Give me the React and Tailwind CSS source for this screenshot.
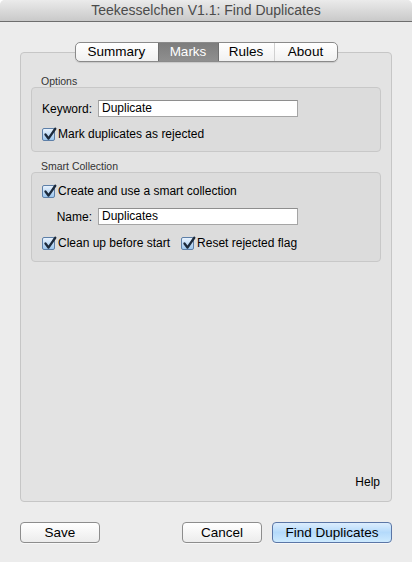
import React from 'react';

const font = { fontFamily: '"Liberation Sans", Arial, sans-serif' };

function CheckBox() {
  return (
    <span className="relative inline-block w-[13px] h-[13px] shrink-0 rounded-[2px] border border-[#5d7fa8] bg-gradient-to-b from-[#e8f2fd] to-[#9cc6ee]">
      <svg viewBox="0 0 13 13" className="absolute -left-[1px] -top-[2px] w-[15px] h-[15px]">
        <path d="M3 6.5 L5.6 10 L11.5 1.5" fill="none" stroke="#1c2a3c" strokeWidth="2" strokeLinecap="round" strokeLinejoin="round" />
      </svg>
    </span>
  );
}

function Check({ label }) {
  return (
    <label className="flex items-center gap-[3px] h-[16px] text-[12px] text-black">
      <CheckBox />
      <span>{label}</span>
    </label>
  );
}

function Field({ label, value }) {
  return (
    <div className="flex items-center h-[17px]">
      <span className="w-[50px] text-right text-[12px] text-black">{label}</span>
      <div className="ml-[6px] w-[200px] h-[17px] bg-white border border-[#a5a5a5] border-t-[#8e8e8e] px-[3px] text-[12px] leading-[15px] text-black">
        {value}
      </div>
    </div>
  );
}

function Button({ children, primary, className }) {
  return (
    <button
      className={
        'h-[21px] rounded-[4px] border text-[13.5px] leading-[19px] text-black shadow-[0_1px_0_rgba(255,255,255,0.6)] ' +
        (primary
          ? 'border-[#5b76a6] bg-gradient-to-b from-[#dcedfd] via-[#b4dafb] to-[#cdeafe] '
          : 'border-[#8d8d8d] bg-gradient-to-b from-white to-[#ececec] ') +
        className
      }
    >
      {children}
    </button>
  );
}

export default function App() {
  const tabs = ['Summary', 'Marks', 'Rules', 'About'];
  const widths = ['w-[82px]', 'w-[61px]', 'w-[55px]', 'w-[63px]'];

  return (
    <div className="w-[412px] h-[562px] bg-white" style={font}>
      <div className="w-full h-full flex flex-col bg-[#ececec] rounded-t-[5px] overflow-hidden">
        <header className="h-[22px] shrink-0 flex items-center justify-center bg-gradient-to-b from-[#ebebeb] to-[#c9c9c9] border-b border-[#6e6e6e] text-[14px] text-[#4b4b4b]">
          Teekesselchen V1.1: Find Duplicates
        </header>

        <div className="px-[20px] flex flex-col">
          <div className="mt-[20px] -mb-[10px] relative z-10 flex justify-center">
            <div className="flex h-[20px] rounded-[5px] border border-[#8a8a8a] bg-gradient-to-b from-white to-[#f1f1f1] overflow-hidden shadow-[0_1px_1px_rgba(0,0,0,0.12)]">
              {tabs.map((t, i) => (
                <div
                  key={t}
                  className={
                    'flex items-center justify-center text-[13.5px] ' +
                    widths[i] +
                    (t === 'Marks'
                      ? ' bg-gradient-to-b from-[#7d7d7d] to-[#8f8f8f] text-white border-x border-[#6f6f6f]'
                      : ' text-black') +
                    (t === 'About' ? ' border-l border-[#d0d0d0]' : '')
                  }
                >
                  {t}
                </div>
              ))}
            </div>
          </div>

          <div className="h-[450px] rounded-[4px] border border-[#c6c6c6] bg-[#e3e3e3] pt-[22px] px-[10px] flex flex-col">
            <div className="h-[12px] leading-[12px] pl-[10px] text-[10.5px] text-[#333]">Options</div>
            <div className="h-[65px] rounded-[4px] border border-[#c8c8c8] bg-[#dcdcdc] pt-[12px] pl-[10px] flex flex-col">
              <Field label="Keyword:" value="Duplicate" />
              <div className="mt-[9px]">
                <Check label="Mark duplicates as rejected" />
              </div>
            </div>

            <div className="mt-[8px] h-[12px] leading-[12px] pl-[10px] text-[10.5px] text-[#333]">Smart Collection</div>
            <div className="h-[90px] rounded-[4px] border border-[#c8c8c8] bg-[#dcdcdc] pt-[10px] pl-[10px] flex flex-col">
              <Check label="Create and use a smart collection" />
              <div className="mt-[9px]">
                <Field label="Name:" value="Duplicates" />
              </div>
              <div className="mt-[10px] flex gap-[11px]">
                <Check label="Clean up before start" />
                <Check label="Reset rejected flag" />
              </div>
            </div>

            <div className="mt-auto mb-[10px] flex justify-end pr-[1px] text-[12px] text-black">Help</div>
          </div>

          <div className="mt-[20px] flex">
            <Button className="w-[80px]">Save</Button>
            <Button className="w-[80px] ml-auto">Cancel</Button>
            <Button primary className="w-[120px] ml-[10px]">Find Duplicates</Button>
          </div>
        </div>
      </div>
    </div>
  );
}
